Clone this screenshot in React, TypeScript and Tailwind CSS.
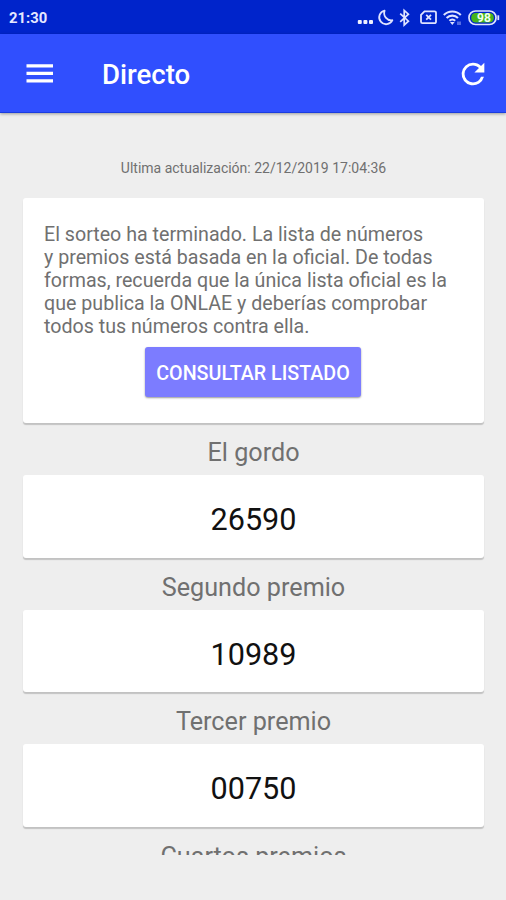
const PREMIOS = [
  { titulo: 'El gordo', numero: '26590' },
  { titulo: 'Segundo premio', numero: '10989' },
  { titulo: 'Tercer premio', numero: '00750' },
];

function StatusIcons() {
  return (
    <svg width="150" height="34" viewBox="356 0 150 34" fill="none" stroke="#dfe3ff" strokeWidth="1.8">
      <g fill="#eef0ff" stroke="none">
        <rect x="357.8" y="20" width="4" height="4" rx="1" />
        <rect x="363.4" y="20" width="4" height="4" rx="1" />
        <rect x="369" y="20" width="4" height="4" rx="1" />
      </g>
      <path d="M384.6 10.6a6.9 6.9 0 1 0 7.8 9.6a7.2 7.2 0 0 1-7.8-9.6z" strokeLinejoin="round" />
      <path d="M400.2 13.6l8.2 7.6l-4.2 3.8V10.4l4.2 3.8l-8.2 7.6" strokeWidth="1.7" />
      <path d="M424.5 11.3h10a1.5 1.5 0 0 1 1.5 1.5v8.9a1.5 1.5 0 0 1-1.5 1.5h-12a1.5 1.5 0 0 1-1.5-1.5v-6.9z" />
      <path d="M426.2 14.8l4.8 4.8M431 14.8l-4.8 4.8" />
      <path d="M443.8 15a12 12 0 0 1 17 0M446.6 18a8 8 0 0 1 11.4 0M449.4 20.8a4.3 4.3 0 0 1 5.8 0" strokeWidth="2.1" />
      <path d="M450 22l2.3 3l2.3-3z" fill="#dfe3ff" stroke="none" />
      <path d="M458 21.5v3.5M460 21.5v3.5" stroke="#8d9df5" strokeWidth="1.2" />
      <rect x="469" y="11" width="27" height="13.5" rx="6.5" strokeWidth="1.7" />
      <rect x="471.2" y="13" width="22.6" height="9.5" rx="4.5" fill="#45b51c" stroke="none" />
      <path d="M498.3 15.3v4.8" strokeWidth="1.8" />
      <text x="484" y="22" textAnchor="middle" fontSize="12" fontWeight="700" fill="#f2fff0" stroke="none">98</text>
    </svg>
  );
}

export default function App() {
  return (
    <div className="flex h-[900px] w-[506px] flex-col overflow-hidden bg-[#eeeeee] font-['Roboto',sans-serif] text-[#707070]">
      <div className="flex h-[34px] shrink-0 items-center justify-between bg-[#0024cb] pl-[9px]">
        <span className="pt-[3px] text-[14.8px] font-bold text-[#e6e9ff]">21:30</span>
        <StatusIcons />
      </div>

      <header className="z-10 flex h-[79px] shrink-0 items-center border-b border-[#1a3de0] bg-[#304ffe] pr-[16px] pl-[26px] text-white shadow-[0_1px_3px_rgba(0,0,0,0.35)]">
        <button className="w-[27px]">
          <svg width="27" height="19" viewBox="0 0 27 19" fill="currentColor">
            <path d="M0.5 0.2h26.5v3.2h-26.5zM0.5 7.7h26.5v3.2h-26.5zM0.5 15.2h26.5v3.2h-26.5z" />
          </svg>
        </button>
        <h1 className="ml-[49px] flex-1 pt-[3px] text-[27.6px] font-medium">Directo</h1>
        <svg className="mt-px" width="34" height="34" viewBox="0 0 24 24" fill="currentColor">
          <path d="M17.65 6.35A7.958 7.958 0 0 0 12 4a8 8 0 1 0 7.73 10h-2.08A5.99 5.99 0 0 1 12 18a6 6 0 1 1 0-12c1.66 0 3.14.69 4.22 1.78L13 11h7V4l-2.35 2.35z" />
        </svg>
      </header>

      <main className="flex h-[742px] flex-col overflow-hidden px-[23px] pt-[46px]">
        <p className="mr-[-1px] h-[39px] shrink-0 text-center text-[14px] leading-[18px]">Ultima actualización: 22/12/2019 17:04:36</p>

        <section className="mr-[-1px] flex h-[225px] shrink-0 flex-col items-center rounded-[3px] bg-white pt-[25px] shadow-[0_2px_1px_#c2c2c2]">
          <p className="w-full pl-[21px] text-[19.65px] leading-[23px] whitespace-nowrap">
            El sorteo ha terminado. La lista de números<br />
            y premios está basada en la oficial. De todas<br />
            formas, recuerda que la única lista oficial es la<br />
            que publica la ONLAE y deberías comprobar<br />
            todos tus números contra ella.
          </p>
          <button className="mt-[9px] mr-px h-[50px] w-[216px] rounded-[3px] bg-[#7c7cff] pt-[3px] text-[19.7px] font-medium whitespace-nowrap text-white shadow-[0_1px_2px_rgba(0,0,0,0.4)]">
            CONSULTAR LISTADO
          </button>
        </section>

        {PREMIOS.map(p => (
          <section key={p.titulo} className="mr-[-1px] shrink-0">
            <h2 className="h-[52px] pt-[15px] text-center text-[25.2px] leading-[30px]">{p.titulo}</h2>
            <div className="flex h-[82.5px] items-center justify-center rounded-[3px] bg-white pt-[8px] text-[30.6px] text-[#111] shadow-[0_2px_1px_#c2c2c2]">
              {p.numero}
            </div>
          </section>
        ))}
        <h2 className="mr-[-1px] shrink-0 pt-[15px] text-center text-[25.2px] leading-[30px]">Cuartos premios</h2>
      </main>
    </div>
  );
}
